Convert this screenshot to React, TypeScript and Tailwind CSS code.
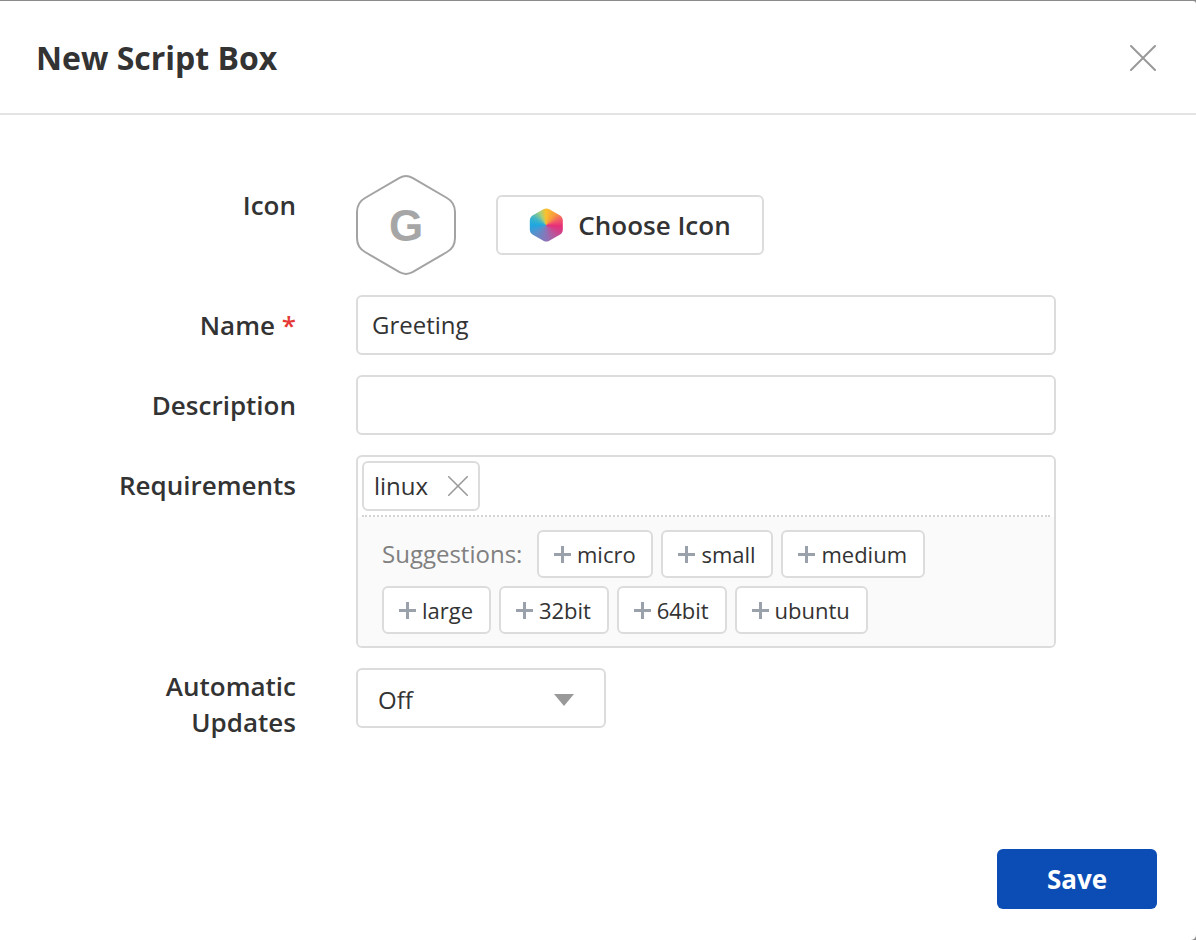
import React from 'react';

const suggestionsRow2 = ['large', '32bit', '64bit', 'ubuntu'];
const suggestionsRow1 = ['micro', 'small', 'medium'];

function CloseIcon({ size, color }: { size: number; color: string }) {
  return (
    <svg width={size} height={size} viewBox="0 0 26 26" fill="none" stroke={color} strokeWidth="2" strokeLinecap="round">
      <path d="M1 1L25 25M25 1L1 25" />
    </svg>
  );
}

function Chip({ label }: { label: string }) {
  return (
    <div className="h-[48px] flex items-center gap-[6px] pl-[15px] pr-[15.8px] bg-white border-2 border-[#dcdcdc] rounded-[6px] text-[22px] text-[#333]">
      <svg width="17" height="17" viewBox="0 0 17 17" stroke="#9aa1ab" strokeWidth="3" className="mt-[1px]">
        <path d="M8.5 0V17M0 8.5H17" />
      </svg>
      <span>{label}</span>
    </div>
  );
}

function Label({ children, tight }: { children: React.ReactNode; tight?: boolean }) {
  return (
    <div className={`w-[296px] shrink-0 text-right text-[26px] leading-[36px] font-semibold text-[#333] ${tight ? 'pt-0' : 'pt-[12px]'}`}>
      {children}
    </div>
  );
}

export default function App() {
  return (
    <div className="w-[1196px] h-[940px] bg-[#8a8a8a] pt-[1px] overflow-hidden font-['Open_Sans',sans-serif]">
      <div className="h-[939px] bg-white rounded-tr-[3px] rounded-br-[5px] flex flex-col">
        <header className="h-[114px] shrink-0 border-b-2 border-[#e4e4e4] flex items-center justify-between pl-[36px] pr-[40px]">
          <h1 className="text-[32px] font-bold text-[#333] leading-[40px] mt-[1px]">New Script Box</h1>
          <div className="mt-[1px]">
            <CloseIcon size={26} color="#999999" />
          </div>
        </header>

        <main className="flex-1 flex flex-col gap-[20px] pt-[60px]">
          <div className="flex gap-[60px]">
            <Label>Icon</Label>
            <div className="flex items-center gap-[40px]">
              <div className="relative w-[100px] h-[100px] flex items-center justify-center">
                <svg width="100" height="100" viewBox="0 0 100 100" fill="none" className="absolute inset-0">
                  <path
                    d="M43.5 2.8Q50 -0.6 56.5 2.8L91 23Q99 27.6 99 37V63Q99 72.4 91 77L56.5 97.2Q50 100.6 43.5 97.2L9 77Q1 72.4 1 63V37Q1 27.6 9 23Z"
                    stroke="#a3a3a3"
                    strokeWidth="2"
                  />
                </svg>
                <span className="relative mt-[1px] font-['Liberation_Sans',sans-serif] font-bold text-[44px] text-[#a6a6a6] leading-none">G</span>
              </div>
              <button className="w-[268px] h-[60px] flex items-center justify-center gap-[15px] bg-white border-2 border-[#dcdcdc] rounded-[6px] text-[26px] font-semibold text-[#333]">
                <span className="w-[34px] h-[34px] bg-[conic-gradient(#fbc02d_0deg,#f89a3e_40deg,#f0506e_75deg,#e62e78_95deg,#b9569c_140deg,#8a74b8_180deg,#5d8fca_230deg,#1ea7e1_270deg,#3fb5c8_300deg,#a9cf78_335deg,#fbc02d_360deg)] [clip-path:path('M14.5_1Q17_0_19.5_1L30_7Q33.5_9_33.5_12.5V21.5Q33.5_25_30_27L19.5_33Q17_34_14.5_33L4_27Q.5_25_.5_21.5V12.5Q.5_9_4_7Z')]" />
                <span className="mt-[1px]">Choose Icon</span>
              </button>
            </div>
          </div>

          <div className="flex gap-[60px]">
            <Label>
              Name <span className="text-[#e53935]">*</span>
            </Label>
            <div className="w-[700px] h-[60px] flex items-center px-[14px] bg-white border-2 border-[#dcdcdc] rounded-[6px] text-[24px] text-[#333]">
              Greeting
            </div>
          </div>

          <div className="flex gap-[60px]">
            <Label>Description</Label>
            <div className="w-[700px] h-[60px] bg-white border-2 border-[#dcdcdc] rounded-[6px]" />
          </div>

          <div className="flex gap-[60px]">
            <Label>Requirements</Label>
            <div className="w-[700px] h-[193px] bg-white border-2 border-[#dcdcdc] rounded-[6px] overflow-hidden flex flex-col">
              <div className="h-[60px] shrink-0 mx-[4px] pt-[4px] border-b-2 border-dotted border-[#d4d4d4]">
                <div className="w-[118px] h-[50px] flex items-center justify-between pl-[10px] pr-[10px] border-2 border-[#dcdcdc] rounded-[6px] text-[24px] text-[#333]">
                  <span>linux</span>
                  <CloseIcon size={20} color="#999999" />
                </div>
              </div>
              <div className="flex-1 bg-[#fafafa] pl-[24px] pt-[13px] flex flex-col gap-[8px]">
                <div className="flex items-center gap-[8px]">
                  <span className="text-[24px] text-[#808080] mr-[6.6px]">Suggestions:</span>
                  {suggestionsRow1.map((s) => (
                    <Chip key={s} label={s} />
                  ))}
                </div>
                <div className="flex items-center gap-[8px]">
                  {suggestionsRow2.map((s) => (
                    <Chip key={s} label={s} />
                  ))}
                </div>
              </div>
            </div>
          </div>

          <div className="flex gap-[60px]">
            <Label tight>
              Automatic
              <br />
              Updates
            </Label>
            <div className="w-[250px] h-[60px] flex items-center justify-between pt-[4px] pl-[20px] pr-[30px] bg-white border-2 border-[#dcdcdc] rounded-[6px] text-[24px] text-[#333]">
              <span>Off</span>
              <svg width="20" height="12" viewBox="0 0 20 12" fill="#999999">
                <path d="M0 0H20L10 12Z" />
              </svg>
            </div>
          </div>
        </main>

        <footer className="flex justify-end pr-[39px] pb-[31px]">
          <button className="w-[160px] h-[60px] bg-[#0b4cb5] rounded-[6px] text-white text-[26px] font-bold">Save</button>
        </footer>
      </div>
    </div>
  );
}
